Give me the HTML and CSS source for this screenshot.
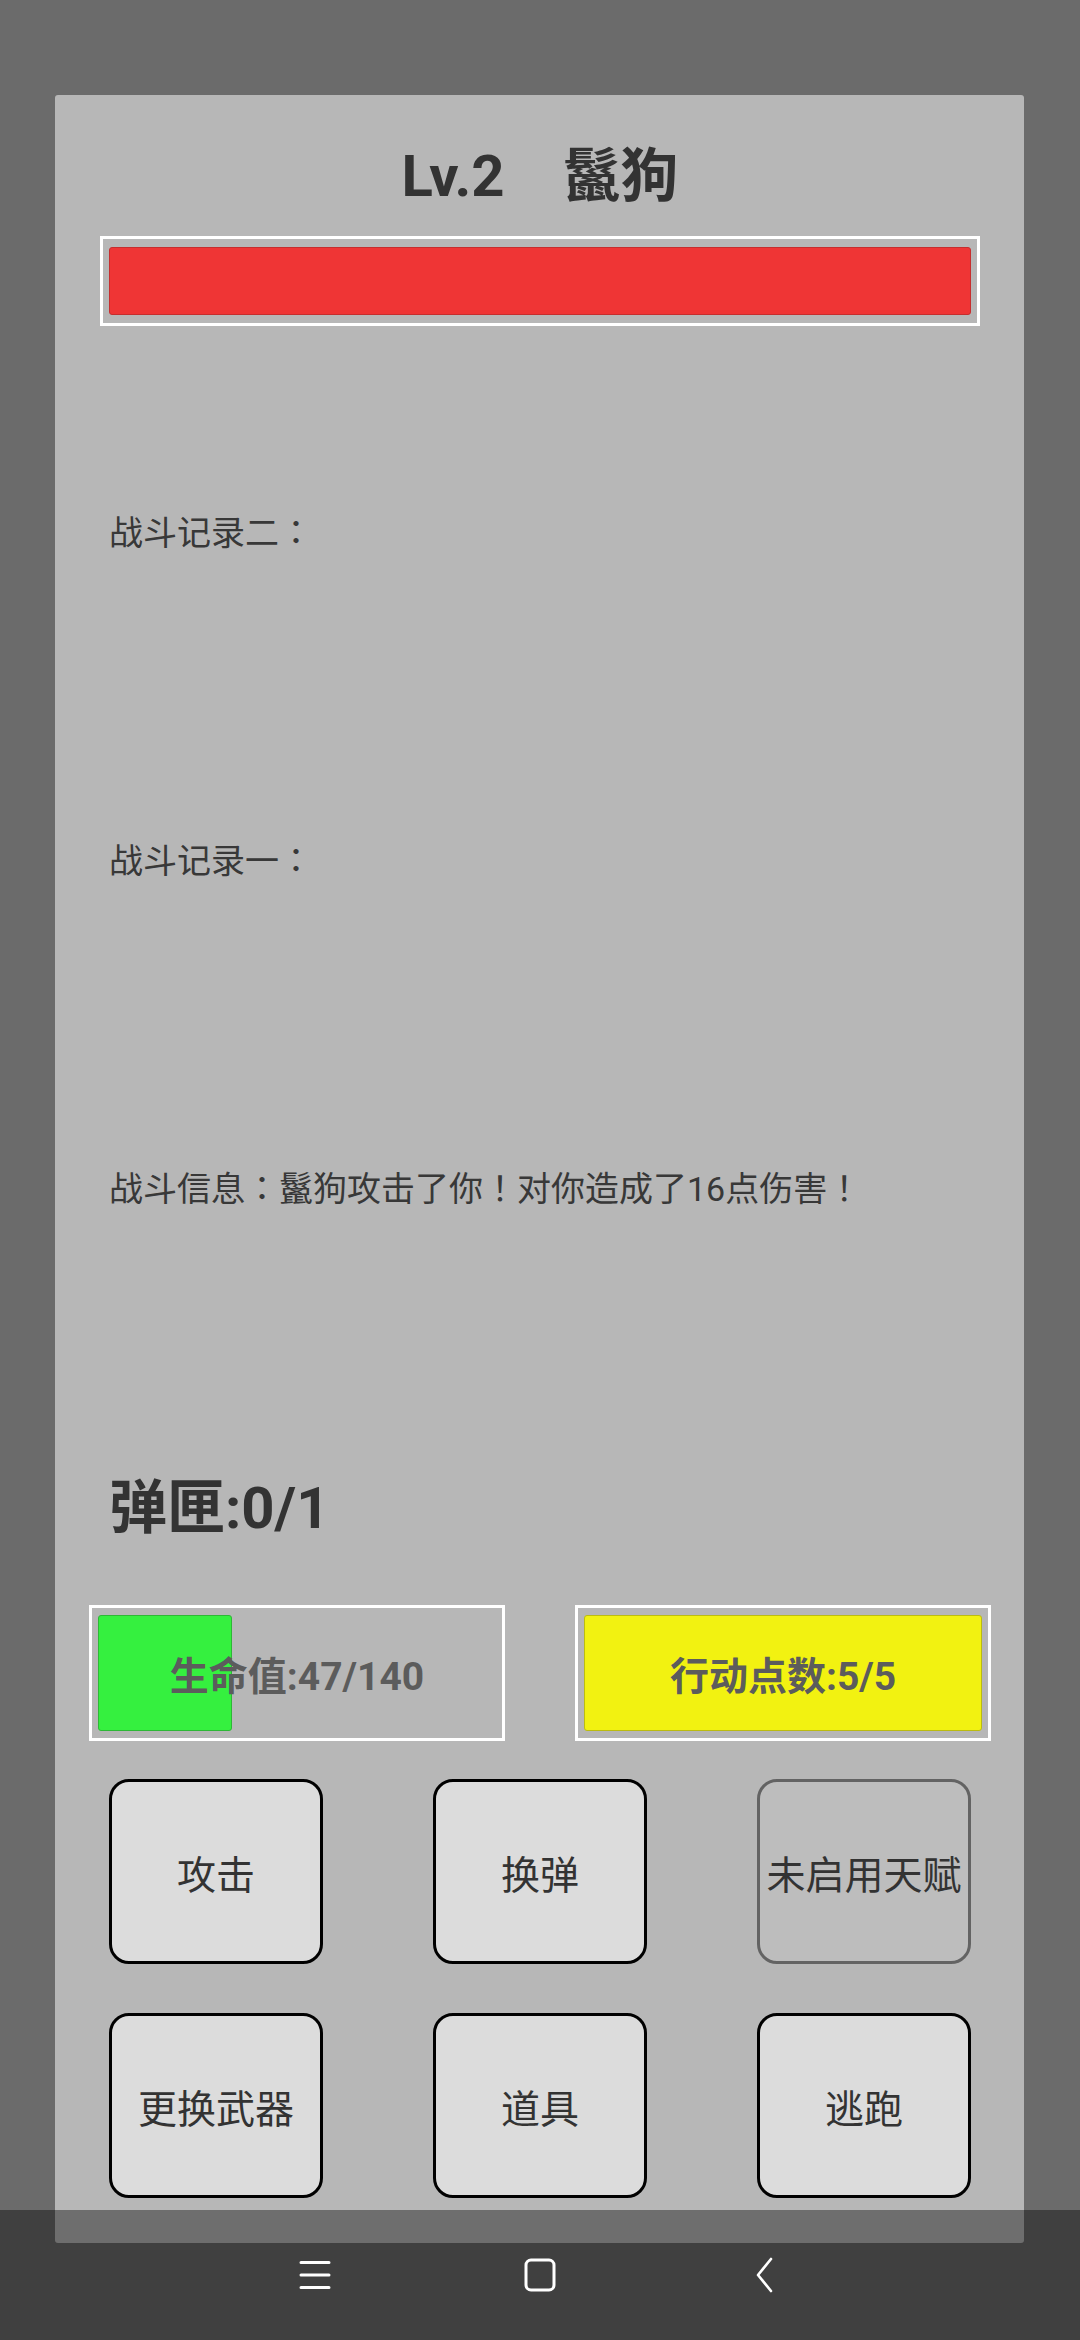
FILE: index.html
```html
<!DOCTYPE html>
<html lang="zh-CN">
<head>
  <meta charset="UTF-8">
  <meta name="viewport" content="width=device-width, initial-scale=1.0">
  <title>战斗</title>
  <link rel="stylesheet" href="styles.css">
</head>
<body>

<div class="panel">
  <h1 class="enemy-name">Lv.2　鬣狗</h1>

  <div class="enemy-hp">
    <div class="enemy-hp-fill"></div>
  </div>

  <div class="logs" lang="ja">
    <p class="log">战斗记录二：</p>
    <p class="log">战斗记录一：</p>
    <p class="log">战斗信息：鬣狗攻击了你！对你造成了16点伤害！</p>
  </div>

  <div class="ammo">弹匣:0/1</div>

  <div class="stats">
    <div class="stat">
      <div class="stat-fill hp" style="width: 33.6%"></div>
      <span class="stat-text">生命值:47/140</span>
    </div>
    <div class="stat">
      <div class="stat-fill ap" style="width: 100%"></div>
      <span class="stat-text">行动点数:5/5</span>
    </div>
  </div>

  <div class="actions">
    <button class="btn">攻击</button>
    <button class="btn">换弹</button>
    <button class="btn disabled">未启用天赋</button>
    <button class="btn">更换武器</button>
    <button class="btn">道具</button>
    <button class="btn">逃跑</button>
  </div>
</div>

<!-- system navigation bar -->
<div class="navbar">
  <span class="nav-icon">
    <svg width="32" height="30" viewBox="0 0 32 30">
      <path d="M2 2.5h28M2 15h28M2 27.5h28" stroke="#fff" stroke-width="3" stroke-linecap="round" fill="none"/>
    </svg>
  </span>
  <span class="nav-icon">
    <svg width="32" height="34" viewBox="0 0 32 34">
      <rect x="2" y="2" width="28" height="30" rx="5" stroke="#fff" stroke-width="3" fill="none"/>
    </svg>
  </span>
  <span class="nav-icon">
    <svg width="20" height="36" viewBox="0 0 20 36">
      <path d="M16 2L3 18l13 16" stroke="#fff" stroke-width="2.6" stroke-linecap="round" stroke-linejoin="round" fill="none"/>
    </svg>
  </span>
</div>

</body>
</html>
```

FILE: styles.css
```css
body {
  margin: 0;
  height: 2340px;
  overflow: hidden;
  background-color: #6B6B6B;
  font-family: Roboto, "Noto Sans CJK JP", sans-serif;
  color: #333;
}

.panel {
  box-sizing: border-box;
  width: 969px;
  height: 2148px;
  margin: 95px 0 0 55px;
  padding: 46px 53px 0 54px;
  background-color: #B7B7B7;
  border-radius: 3px;
}

.enemy-name {
  margin: 0 0 25px;
  font-size: 58px;
  line-height: 70px;
  font-weight: bold;
  text-align: center;
  color: #333;
}

.enemy-hp {
  box-sizing: border-box;
  height: 90px;
  margin: 0 -9px;
  padding: 8px 6px;
  border: 3px solid #fff;
}

.enemy-hp-fill {
  height: 100%;
  box-sizing: border-box;
  background-color: #EF3535;
  border: 1px solid #C62E2E;
  border-radius: 3px;
}

.logs {
  display: flex;
  flex-direction: column;
  gap: 278px;
  padding-top: 182px;
}

.log {
  margin: 0;
  font-size: 34px;
  line-height: 50px;
  color: #383838;
}

.ammo {
  margin-top: 259px;
  font-size: 58px;
  line-height: 70px;
  font-weight: bold;
  color: #333;
}

.stats {
  display: flex;
  justify-content: space-between;
  margin: 62px -20px 0 -20px;
}

.stat {
  position: relative;
  box-sizing: border-box;
  width: 416px;
  height: 136px;
  padding: 7px 6px;
  border: 3px solid #fff;
  display: flex;
  align-items: center;
}

.stat-fill {
  height: 100%;
  box-sizing: border-box;
  border-radius: 3px;
}

.stat-fill.hp {
  background-color: #35F03F;
  border: 1px solid #2DB836;
}

.stat-fill.ap {
  background-color: #F2F211;
  border: 1px solid #BCBC10;
}

.stat-text {
  position: absolute;
  left: 0;
  right: 0;
  text-align: center;
  font-size: 39px;
  font-weight: bold;
  color: #5C5C5C;
}

.actions {
  display: grid;
  grid-template-columns: repeat(3, 214px);
  grid-auto-rows: 185px;
  justify-content: space-between;
  row-gap: 49px;
  margin-top: 38px;
}

.btn {
  box-sizing: border-box;
  padding: 0;
  background-color: #DCDCDC;
  border: 3px solid #000;
  border-radius: 20px;
  font-family: inherit;
  font-size: 39px;
  color: #333;
  white-space: nowrap;
}

.btn.disabled {
  background-color: #BDBDBD;
  border-color: #636363;
}

.navbar {
  position: absolute;
  left: 0;
  right: 0;
  top: 2210px;
  height: 130px;
  background-color: rgba(0, 0, 0, 0.4);
  display: flex;
  justify-content: center;
  align-items: center;
  gap: 165px;
}

.nav-icon {
  width: 60px;
  display: flex;
  justify-content: center;
}
```
